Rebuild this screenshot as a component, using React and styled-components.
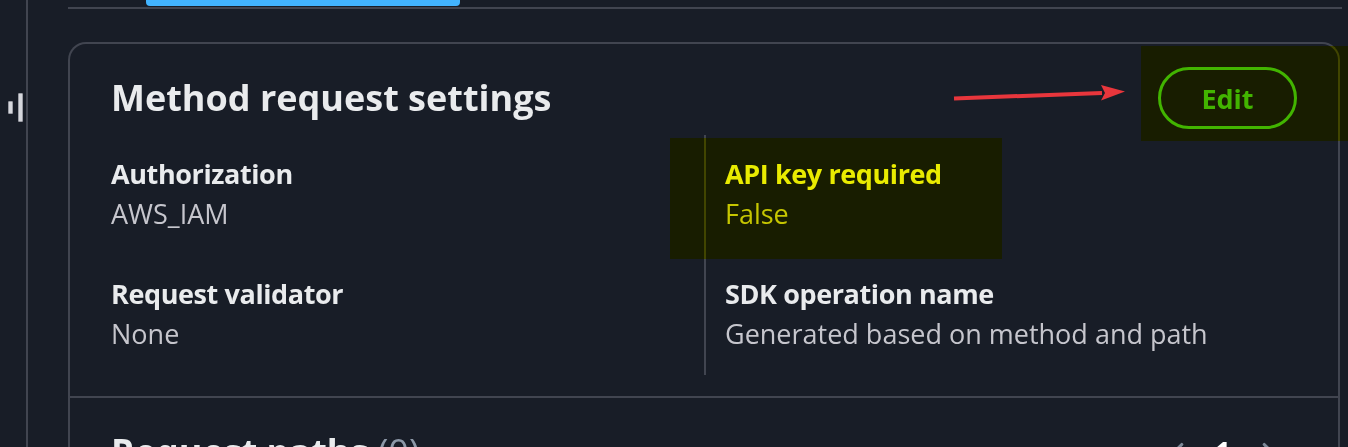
import styled, { createGlobalStyle } from 'styled-components';
import { ChevronLeft, ChevronRight } from 'lucide-react';

const GlobalStyle = createGlobalStyle`
  body {
    margin: 0;
    background: #181d27;
    font-family: "Open Sans", "Noto Sans", sans-serif;
  }
`;

const Page = styled.div`
  display: flex;
  height: 447px;
  overflow: hidden;
`;

const Rail = styled.aside`
  width: 28px;
  flex-shrink: 0;
  border-right: 2px solid #414550;
  display: flex;
  align-items: flex-start;
  padding: 93px 0 0 8px;
  box-sizing: border-box;
  height: 100%;
`;

const RailIcon = styled.div`
  display: flex;
  align-items: center;
  gap: 5px;
`;

const Bar = styled.span`
  display: block;
  width: 3px;
  height: ${(p) => p.$h}px;
  background: #d5d7dc;
  border: 1px solid #9a9ca4;
  border-radius: 1px;
`;

const Main = styled.main`
  flex: 1;
  padding: 0 6px 0 40px;
  min-width: 0;
`;

const TabStrip = styled.div`
  height: 7px;
  border-bottom: 2px solid #414550;
  padding-left: 78px;
`;

const TabIndicator = styled.div`
  width: 314px;
  height: 6px;
  background: #42b4ff;
  border-radius: 0 0 4px 4px;
`;

const Card = styled.section`
  position: relative;
  margin: 33px 2px 0 0;
  border: 2px solid #414550;
  border-bottom: none;
  border-radius: 18px 18px 0 0;
  padding: 0 41px;
  height: 460px;
`;

const Header = styled.div`
  display: flex;
  justify-content: space-between;
  align-items: center;
  padding-top: 23px;
`;

const Title = styled.h2`
  margin: 0;
  font-size: 36px;
  line-height: 44px;
  font-weight: 700;
  color: #e9ebed;
`;

const Count = styled.span`
  font-weight: 400;
  color: #8d99a8;
`;

const EditButton = styled.button`
  width: 139px;
  height: 62px;
  border: 3px solid #42b4ff;
  border-radius: 32px;
  background: transparent;
  color: #42b4ff;
  font-family: inherit;
  font-size: 27px;
  font-weight: 700;
  padding: 0;
`;

const Grid = styled.div`
  display: grid;
  grid-template-columns: 1fr 1fr;
  margin-top: 6px;
`;

const Column = styled.div`
  display: flex;
  flex-direction: column;
  gap: 40px;
  padding: 19px 0 21px ${(p) => (p.$divided ? '19px' : '0')};
  border-left: ${(p) => (p.$divided ? '2px solid #414550' : 'none')};
`;

const Label = styled.div`
  font-size: 27px;
  line-height: 40px;
  font-weight: 700;
  letter-spacing: -0.4px;
  color: #e9ebed;
`;

const Value = styled.div`
  font-size: 27px;
  line-height: 40px;
  color: #c6c6cd;
`;

const Divider = styled.div`
  margin: 21px -41px 0;
  border-top: 2px solid #414550;
`;

const SubHeader = styled.div`
  display: flex;
  justify-content: space-between;
  align-items: center;
  padding-top: 32px;
`;

const Pager = styled.div`
  display: flex;
  align-items: center;
  gap: 22px;
  margin-right: 14px;
  color: #7d8998;
`;

const PageNum = styled.span`
  font-size: 28px;
  font-weight: 700;
  color: #ffffff;
`;

const Highlight = styled.div`
  position: absolute;
  left: ${(p) => p.$x}px;
  top: ${(p) => p.$y}px;
  width: ${(p) => p.$w}px;
  height: ${(p) => p.$h}px;
  background: #ffff00;
  mix-blend-mode: multiply;
  pointer-events: none;
`;

const Arrow = styled.svg`
  position: absolute;
  left: 882px;
  top: 39px;
`;

const fields = [
  [
    { label: 'Authorization', value: 'AWS_IAM' },
    { label: 'Request validator', value: 'None' },
  ],
  [
    { label: 'API key required', value: 'False' },
    { label: 'SDK operation name', value: 'Generated based on method and path' },
  ],
];

export default function App() {
  return (
    <>
      <GlobalStyle />
      <Page>
        <Rail>
          <RailIcon>
            <Bar $h={11} />
            <Bar $h={27} />
          </RailIcon>
        </Rail>
        <Main>
          <TabStrip>
            <TabIndicator />
          </TabStrip>
          <Card>
            <Header>
              <Title>Method request settings</Title>
              <EditButton>Edit</EditButton>
            </Header>
            <Grid>
              {fields.map((col, i) => (
                <Column key={i} $divided={i === 1}>
                  {col.map((f) => (
                    <div key={f.label}>
                      <Label>{f.label}</Label>
                      <Value>{f.value}</Value>
                    </div>
                  ))}
                </Column>
              ))}
            </Grid>
            <Divider />
            <SubHeader>
              <Title>
                Request paths <Count>(0)</Count>
              </Title>
              <Pager>
                <ChevronLeft size={30} strokeWidth={2.5} />
                <PageNum>1</PageNum>
                <ChevronRight size={30} strokeWidth={2.5} />
              </Pager>
            </SubHeader>

            <Arrow width="176" height="20" viewBox="0 0 176 20">
              <path d="M2 15.5 L150 10" stroke="#e8363c" strokeWidth="4" strokeLinecap="butt" />
              <path d="M173 8.5 L149 2 L153 10 L149 17.5 Z" fill="#e8363c" />
            </Arrow>
            <Highlight $x={600} $y={94} $w={332} $h={121} />
            <Highlight $x={1071} $y={2} $w={207} $h={95} />
          </Card>
        </Main>
      </Page>
    </>
  );
}
